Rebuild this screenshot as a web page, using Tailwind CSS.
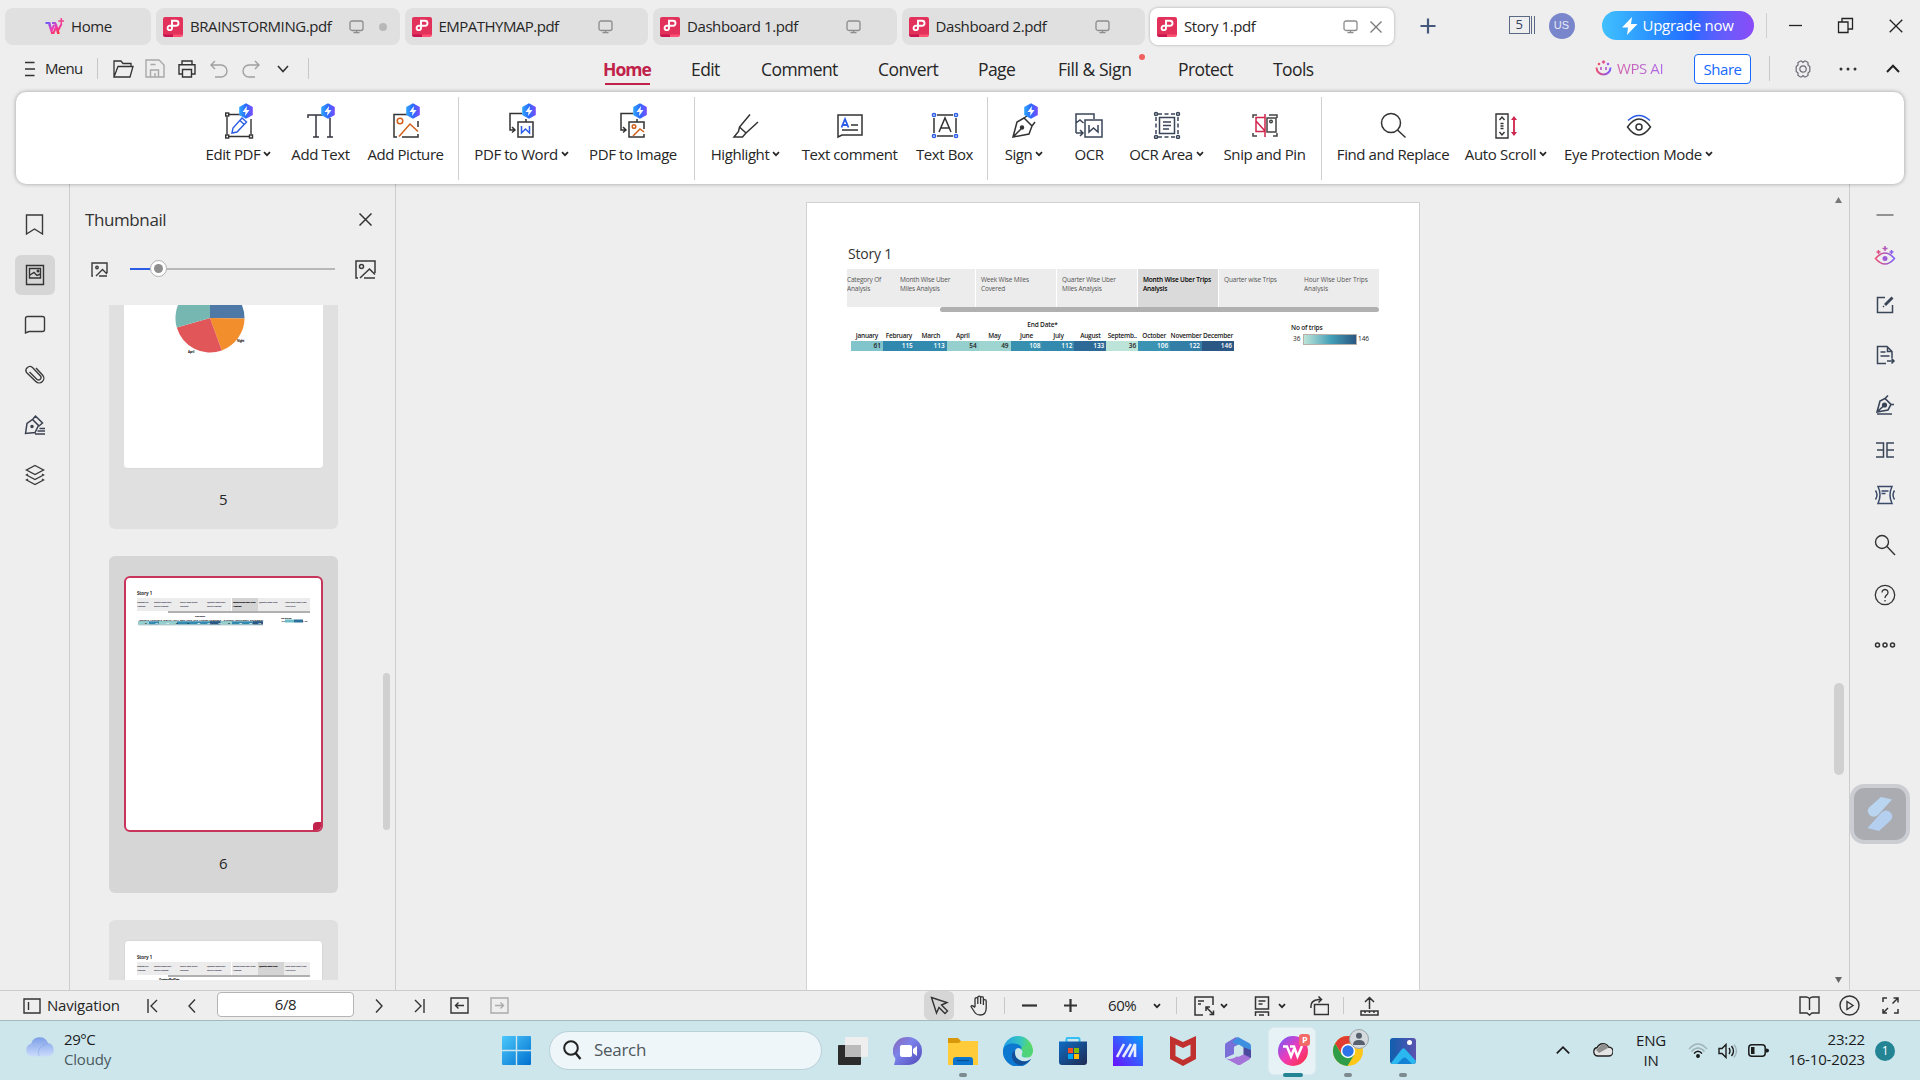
<!DOCTYPE html>
<html lang="en">
<head>
<meta charset="utf-8">
<title>Story 1.pdf</title>
<script src="https://cdn.jsdelivr.net/npm/@tailwindcss/browser@4"></script>
</head>
<body class="w-[1920px] h-[1080px] overflow-hidden bg-[#eeeeee] font-['Open_Sans','Noto_Sans',sans-serif] text-[15px] tracking-[-0.42px] text-[#262626] flex flex-col whitespace-nowrap">

<svg class="absolute w-0 h-0">
  <defs>
    <linearGradient id="badge" x1="0" x2="1"><stop offset="0" stop-color="#2fa6ff"/><stop offset=".5" stop-color="#2b6bff"/><stop offset="1" stop-color="#7a4dff"/></linearGradient>
    <linearGradient id="ai" x1="0" x2="1"><stop offset="0" stop-color="#ef5070"/><stop offset="1" stop-color="#7b5cff"/></linearGradient>
    <linearGradient id="wps" x1="0" y1="0" x2="1" y2="1"><stop offset="0" stop-color="#6a5cff"/><stop offset=".5" stop-color="#f03bb8"/><stop offset="1" stop-color="#ff3030"/></linearGradient>
  </defs>
  <symbol id="pdf" viewBox="0 0 20 20"><path d="M2 0h16a2 2 0 0 1 2 2v16H0V2a2 2 0 0 1 2-2z" fill="#e2315a"/><path d="M0 17.500h10V20H2a2 2 0 0 1-2-2z" fill="#c8154f"/><path d="M10 17.500h10v.5a2 2 0 0 1-2 2h-8z" fill="#ff5173"/><path d="M9 3.700h4a2.500 2.500 0 0 1 0 5H9zM9 8.700v2.200a2.200 2.200 0 1 1-2.200-2.200H9" fill="none" stroke="#fff" stroke-width="1.900"/></symbol>
  <symbol id="mon" viewBox="0 0 16 14"><rect x="1" y="1" width="13" height="9.500" rx="2" fill="none" stroke="#8c8c8c" stroke-width="1.300"/><path d="M7.500 10.500v2M4.500 12.700h6" stroke="#8c8c8c" stroke-width="1.300"/></symbol>
  <symbol id="chev" viewBox="0 0 8 8"><path d="M1 2.200l3 3 3-3" fill="none" stroke="#262626" stroke-width="1.700"/></symbol>
  <symbol id="bolt" viewBox="0 0 16 16"><path d="M8 .3L14.800 4v8L8 15.700 1.200 12V4z" fill="url(#badge)" stroke="none"/><path d="M9 3L4.500 9H7.500L7 13l4.500-6H8.500z" fill="#fff" stroke="none"/></symbol>
  <symbol id="doc" viewBox="0 0 199 256">
    <g font-family="Open Sans, sans-serif" fill="#222" font-weight="bold">
    <text x="13" y="18.500" font-size="4.500" textLength="15" font-weight="normal" stroke="#222" stroke-width=".2">Story 1</text>
    <path d="M13 22h173v13H13z" fill="#ececec"/>
    <g font-size="2.300" fill="#3a3550"><text x="13" y="26.500" textLength="11">Category Of</text><text x="13" y="30.500" textLength="8">Analysis</text><text x="30" y="26.500" textLength="17">Month Wise Uber</text><text x="30" y="30.500" textLength="14">Miles Analysis</text><text x="56" y="26.500" textLength="17">Week Wise Miles</text><text x="56" y="30.500" textLength="8">Covered</text><text x="83" y="26.500" textLength="18">Quarter Wise Uber</text><text x="83" y="30.500" textLength="14">Miles Analysis</text><text x="109" y="26.500" textLength="22">Month Wise Uber Trips</text><text x="109" y="30.500" textLength="8">Analysis</text><text x="135" y="26.500" textLength="18">Quarter wise Trips</text><text x="161" y="26.500" textLength="21">Hour Wise Uber Trips</text><text x="161" y="30.500" textLength="10">Analysis</text></g>
    <path d="M107.500 22v13" stroke="#fff"/>
    <path d="M44 36h142" stroke="#b0b0b0" stroke-width="1.800"/></g>
  </symbol>
</svg>

<!-- Document tabs -->
<header class="h-[45px] pl-[5px] flex items-end gap-[5px] shrink-0">
  <div class="w-[146px] h-[37px] rounded-lg bg-[#e0e0e0] flex items-center pl-[39px] gap-[7px]">
    <svg class="w-[20px] h-[18px]" viewBox="0 0 20 18"><path d="M1.500 5h4l2 8 2.500-6M8 5h3l2.500 8.500L17.500 6M5 6l3 9h1.500l3-7 2 7h1" fill="none" stroke="url(#wps)" stroke-width="2"/><path d="M17.300 0v6M14.300 3h6" stroke="#f0408e" stroke-width="1.500"/></svg>
    <span>Home</span></div>
  <div class="w-[243.500px] h-[37px] rounded-lg bg-[#e0e0e0] flex items-center pl-[7px]">
    <svg class="w-5 h-5"><use href="#pdf"/></svg><span class="ml-[7px] w-[159px]">BRAINSTORMING.pdf</span><svg class="w-4 h-3.5"><use href="#mon"/></svg><i class="ml-[14px] size-2 rounded-full bg-[#b8b8b8]"></i></div>
  <div class="w-[243.500px] h-[37px] rounded-lg bg-[#e0e0e0] flex items-center pl-[7px]">
    <svg class="w-5 h-5"><use href="#pdf"/></svg><span class="ml-[7px] w-[159px] tracking-[-0.52px]">EMPATHYMAP.pdf</span><svg class="w-4 h-3.5"><use href="#mon"/></svg></div>
  <div class="w-[243.500px] h-[37px] rounded-lg bg-[#e0e0e0] flex items-center pl-[7px]">
    <svg class="w-5 h-5"><use href="#pdf"/></svg><span class="ml-[7px] w-[159px]">Dashboard 1.pdf</span><svg class="w-4 h-3.5"><use href="#mon"/></svg></div>
  <div class="w-[243.500px] h-[37px] rounded-lg bg-[#e0e0e0] flex items-center pl-[7px]">
    <svg class="w-5 h-5"><use href="#pdf"/></svg><span class="ml-[7px] w-[159px]">Dashboard 2.pdf</span><svg class="w-4 h-3.5"><use href="#mon"/></svg></div>
  <div class="w-[243.500px] h-[37px] rounded-lg bg-white shadow-[0_0_3px_rgba(0,0,0,0.3)] flex items-center pl-[7px]">
    <svg class="w-5 h-5"><use href="#pdf"/></svg><span class="ml-[7px] w-[159px]">Story 1.pdf</span><svg class="w-4 h-3.5"><use href="#mon"/></svg>
    <svg class="ml-[10px] w-3.5 h-3.5" viewBox="0 0 14 14"><path d="M1.500 1.500l11 11m0-11l-11 11" stroke="#777" stroke-width="1.300"/></svg></div>
  <div class="ml-[21px] h-[37px] mb-[1px] flex items-center">
    <svg class="w-4 h-4" viewBox="0 0 16 16"><path d="M8 .5v15M.5 8h15" stroke="#46587a" stroke-width="2.200"/></svg>
    <div class="ml-[73px] w-[26px] h-[19px] flex">
      <span class="w-[21px] h-[18px] border-[1.500px] border-[#5a6884] text-[13px] leading-[15px] text-center text-[#34425e]">5</span>
      <i class="ml-[1px] h-[18px] w-[4px] border-x border-[#5a6884]"></i></div>
    <span class="ml-[14px] w-[26px] h-[26px] rounded-full bg-[#7986cb] text-[#e8eaf8] text-[11px] tracking-normal font-['Liberation_Sans',sans-serif] leading-[25px] text-center">US</span>
    <div class="ml-[27px] w-[152px] h-[29px] rounded-full bg-linear-to-r from-[#41c0ff] via-[#2668ff] via-60% to-[#8a4bf8] text-white flex items-center pl-[20px]">
      <svg class="w-[16px] h-[18px]" viewBox="0 0 16 18"><path d="M10 0L0 10.500h6L5 18 15.500 7H9z" fill="#fff"/></svg><span class="ml-[5px] tracking-[-0.28px]">Upgrade now</span></div>
    <i class="ml-[12px] w-px h-[25px] bg-[#cfcfcf]"></i>
    <svg class="ml-[22px] w-[13px] h-[14px]" viewBox="0 0 13 14"><path d="M0 6.500h13" stroke="#222" stroke-width="1.300"/></svg>
    <svg class="ml-[35px] w-[17px] h-[17px]" viewBox="0 0 17 17"><path d="M1.500 5h9.500v10.500H1.500zM5 5V1.500h10.500V12H11" fill="none" stroke="#222" stroke-width="1.300"/></svg>
    <svg class="ml-[35px] w-[14px] h-[14px]" viewBox="0 0 14 14"><path d="M.7.7l12.600 12.600m0-12.600L.7 13.300" stroke="#222" stroke-width="1.300"/></svg>
  </div>
</header>

<!-- Menu bar -->
<nav class="h-[47px] flex items-center shrink-0 relative">
  <svg class="ml-[25px] w-[10px] h-[16px]" viewBox="0 0 10 16"><path d="M0 1.500h9.500M0 8h10M0 14.500h9.500" stroke="#333" stroke-width="1.300"/></svg>
  <span class="ml-[10px] w-[52px] tracking-[-0.7px]">Menu</span>
  <i class="w-px h-[21px] bg-[#c8c8c8]"></i>
  <svg class="ml-[15px] w-[21px] h-[18px]" viewBox="0 0 21 18" fill="none" stroke="#333" stroke-width="1.300"><path d="M1 17V1h7l2 2.500h8V6.500M1 17l4-10.500h15L17 17z"/></svg>
  <svg class="ml-[11px] w-[20px] h-[19px]" viewBox="0 0 20 19" fill="none" stroke="#a8a8a8" stroke-width="1.400"><path d="M1 1h13l5 5v12H1zM5.500 18v-7h8v7M5.500 5.500h5M10 18v-4"/></svg>
  <svg class="ml-[13px] w-[18px] h-[18px]" viewBox="0 0 18 18" fill="none" stroke="#333" stroke-width="1.400"><path d="M4 4.500V1h10v3.500M4 14H1V4.700h16V14h-3M4.500 9.500h9V17h-9z"/></svg>
  <svg class="ml-[14px] w-[18px] h-[18px]" viewBox="0 0 18 18" fill="none" stroke="#a0a0a0" stroke-width="1.400"><path d="M5 1L1 5l4 4M1 5h10a6 6 0 0 1 0 12H5"/></svg>
  <svg class="ml-[14px] w-[18px] h-[18px]" viewBox="0 0 18 18" fill="none" stroke="#a0a0a0" stroke-width="1.400"><path d="M13 1l4 4-4 4M17 5H7a6 6 0 0 0 0 12h6"/></svg>
  <svg class="ml-[17px] w-[12px] h-[8px]" viewBox="0 0 12 8"><path d="M1 1l5 5.500L11 1" fill="none" stroke="#333" stroke-width="1.600"/></svg>
  <i class="ml-[19px] w-px h-[21px] bg-[#c8c8c8]"></i>
  <div class="ml-[294px] flex items-center text-[17.500px] tracking-[-0.58px] h-[38px] pt-px">
    <b class="w-[88px] text-[#c0224a] font-bold tracking-[-0.95px] relative">Home<i class="absolute left-[2px] -bottom-[3px] w-[45px] h-[2px] bg-[#c0224a]"></i></b>
    <span class="w-[70px]">Edit</span><span class="w-[117px]">Comment</span><span class="w-[100px]">Convert</span><span class="w-[80px]">Page</span>
    <span class="w-[120px] relative tracking-[-0.45px]">Fill &amp; Sign<i class="absolute left-[81px] -top-[2px] size-[6px] rounded-full bg-[#f0605e]"></i></span>
    <span class="w-[95px]">Protect</span><span class="w-[60px]">Tools</span>
  </div>
  <svg class="ml-[262px] w-[17px] h-[17px]" viewBox="0 0 17 17"><path d="M1.500 7.500a7 7 0 1 0 14 0" fill="none" stroke="url(#ai)" stroke-width="2"/><path d="M8.500 0l2 2-2 2-2-2z" fill="#e2508c"/><circle cx="4" cy="4" r="1.300" fill="#ef5070"/><circle cx="13" cy="4" r="1.300" fill="#a05cf0"/><path d="M6 7v3M11 7v3" stroke="#b458c8" stroke-width="1.600"/></svg>
  <span class="ml-[5px] w-[77px]"><span class="bg-linear-to-r from-[#cf5fa8] to-[#b06ae8] bg-clip-text text-transparent">WPS AI</span></span>
  <span class="w-[57px] h-[30px] rounded border border-[#1769ff] bg-white text-[#1769ff] text-center leading-[28px]">Share</span>
  <i class="ml-[18px] w-px h-[25px] bg-[#c8c8c8]"></i>
  <svg class="ml-[24px] w-[18px] h-[18px]" viewBox="0 0 18 18" fill="none" stroke="#6b6b76" stroke-width="1.200"><path d="M6.500 1h1l1.500 1.500L10.500 1h1L14 2.500V5l1.800 1.500v5L14 13v2.500L11.500 17h-1L9 15.500 7.500 17h-1L4 15.500V13l-1.800-1.500v-5L4 5V2.500z"/><circle cx="9" cy="9" r="3.200"/></svg>
  <svg class="ml-[27px] w-[18px] h-[4px]" viewBox="0 0 18 4" fill="#333"><circle cx="2" cy="2" r="1.500"/><circle cx="9" cy="2" r="1.500"/><circle cx="16" cy="2" r="1.500"/></svg>
  <svg class="ml-[29px] w-[14px] h-[9px]" viewBox="0 0 14 9"><path d="M1 8l6-6.300L13 8" fill="none" stroke="#222" stroke-width="2"/></svg>
</nav>

<!-- Ribbon -->
<section class="mx-4 w-[1888px] h-[92px] rounded-[10px] bg-white shadow-[0_0_4px_rgba(0,0,0,0.35)] shrink-0 flex items-center relative z-10 pl-[189px] [&>div]:flex [&>div]:flex-col [&>div]:items-center [&>div]:shrink-0 [&>div>svg]:w-8 [&>div>svg]:h-9 [&>div>p]:flex [&>div>p]:items-center [&>div>p]:gap-[3px] [&>div>p]:h-[22px] [&>div>p]:mt-[4px] [&>div]:-mt-[8px] [&_p_svg]:w-[8px] [&_p_svg]:h-[8px] [&>i]:w-px [&>i]:h-[83px] [&>i]:bg-[#cfcfcf] [&>i]:shrink-0">
  <div class="w-[67px]"><svg viewBox="0 0 32 36" fill="none" stroke="#333" stroke-width="1.400"><path d="M4 13.500v18M6 11.500h12M28 16v15.500M6 33.500h20"/><g fill="#fff"><rect x="2.700" y="10" width="3" height="3"/><rect x="2.700" y="32" width="3" height="3"/><rect x="26.500" y="32" width="3" height="3"/></g><path d="M9 30l1-5 9-10 4.500 4-9.500 10zM17 17.500l4 3.800" stroke="#2b5ce6"/><use href="#bolt" x="15" y="0" width="16" height="16"/></svg><p><span>Edit PDF</span><svg><use href="#chev"/></svg></p></div>
  <div class="w-[59px] ml-[19px]"><svg viewBox="0 0 32 36" fill="none" stroke="#34343f" stroke-width="1.500"><path d="M3 15v-3h20M11 12v22M8 34h6M25 15v19M22 34h6"/><use href="#bolt" x="15" y="0" width="16" height="16"/></svg><p>Add Text</p></div>
  <div class="w-[75px] ml-[18px]"><svg viewBox="0 0 32 36" fill="none" stroke="#333" stroke-width="1.500"><path d="M17 11.500H4V34h3M12 34h16v-3M28 18v6"/><circle cx="10" cy="18" r="2.800" stroke="#d2601a"/><path d="M9 33.500L20 21l8 7.500" stroke="#d2601a"/><use href="#bolt" x="15" y="0" width="16" height="16"/></svg><p>Add Picture</p></div>
  <i class="ml-[15px]"></i>
  <div class="w-[95px] ml-[15px]"><svg viewBox="0 0 32 36" fill="none" stroke="#333" stroke-width="1.500"><path d="M16 10.500H4V27h5M6 24l3 3-3 2.500M20 16v3M12 19h15v15H12z"/><path d="M15.500 23v7l4-4 4 4v-7" stroke="#2b5ce6"/><use href="#bolt" x="15" y="0" width="16" height="16"/></svg><p><span>PDF to Word</span><svg><use href="#chev"/></svg></p></div>
  <div class="w-[90px] ml-[19px]"><svg viewBox="0 0 32 36" fill="none" stroke="#333" stroke-width="1.500"><path d="M16 10.500H4V27h5M6 24l3 3-3 2.500M20 16v3M27 26v-7H12v15h15v-3"/><circle cx="17" cy="23.500" r="1.800" stroke="#d2601a"/><path d="M16 33l7-7 4 3" stroke="#d2601a"/><use href="#bolt" x="15" y="0" width="16" height="16"/></svg><p>PDF to Image</p></div>
  <i class="ml-[16px]"></i>
  <div class="w-[73px] ml-[14px]"><svg viewBox="0 0 32 36" fill="none" stroke="#333" stroke-width="1.500"><path d="M20 11.500L9.500 24l-1 4.500L4 34h8.500l3-3.500L28 19M9.500 24l6.500 6"/></svg><p><span>Highlight</span><svg><use href="#chev"/></svg></p></div>
  <div class="w-[95px] ml-[20px]"><svg viewBox="0 0 32 36" fill="none" stroke="#333" stroke-width="1.500"><path d="M4 34V12h24v20H8zM17 22h7M8 27h16"/><path d="M7.500 24.500L11 16l3.500 8.500M8.500 22h5" stroke="#2b5ce6" stroke-width="1.800"/></svg><p>Text comment</p></div>
  <div class="w-[55px] ml-[20px]"><svg viewBox="0 0 32 36" fill="none" stroke="#333" stroke-width="1.500"><path d="M8 12h16M8 33h16M5 15v15M27 15v15"/><path d="M10 29l6-14 6 14M12 25h8"/><g fill="#fff" stroke="#2b5ce6"><circle cx="5" cy="12" r="1.600"/><circle cx="27" cy="12" r="1.600"/><circle cx="5" cy="33" r="1.600"/><circle cx="27" cy="33" r="1.600"/></g></svg><p>Text Box</p></div>
  <i class="ml-[15px]"></i>
  <div class="w-[40px] ml-[16px]"><svg viewBox="0 0 32 36" fill="none" stroke="#333" stroke-width="1.500"><path d="M5 34l4-15 7-4 8 8-3 8zM16 15l3-2M24 23l3-4M5 34l8-8"/><circle cx="14" cy="24.500" r="1.500" fill="#333"/><use href="#bolt" x="15" y="0" width="16" height="16"/></svg><p><span>Sign</span><svg><use href="#chev"/></svg></p></div>
  <div class="w-[30px] ml-[30px]"><svg viewBox="0 0 32 36" fill="none" stroke="#3a4558" stroke-width="1.500"><path d="M21 16v-5H3v19M3 20l4-3 3.500 3M3 30h6M7 27l3 3-3 3M12 17h17v17H12z"/><path d="M16 22v7l4.500-4 4.500 4v-7"/></svg><p>OCR</p></div>
  <div class="w-[75px] ml-[25px]"><svg viewBox="0 0 32 36" fill="none" stroke="#3a4558" stroke-width="1.500"><path d="M5 14v18M27 14v18M7 11h18M7 34h18" stroke-dasharray="4 2.500"/><path d="M8.500 14.500h15v16h-15zM12 19h8M12 22.500h8M12 26h6"/><g fill="#fff"><circle cx="5" cy="11" r="1.500"/><circle cx="27" cy="11" r="1.500"/><circle cx="5" cy="34" r="1.500"/><circle cx="27" cy="34" r="1.500"/></g></svg><p><span>OCR Area</span><svg><use href="#chev"/></svg></p></div>
  <div class="w-[83px] ml-[19px]"><svg viewBox="0 0 32 36" fill="none" stroke="#444" stroke-width="1.500"><path d="M4 15v-3h4M4 30v3h4M20 12h8v3M24 33h4v-3M18 15h9v14h-9z"/><circle cx="22" cy="18.500" r="1.300"/><path d="M16 11v23M16 14.500H7v14h9M7 18l9 10" stroke="#d0244c"/></svg><p>Snip and Pin</p></div>
  <i class="ml-[15px]"></i>
  <div class="w-[114px] ml-[14px]"><svg viewBox="0 0 32 36" fill="none" stroke="#333" stroke-width="1.500"><circle cx="14" cy="20" r="9.500"/><path d="M20.500 27l8 7.500"/></svg><p>Find and Replace</p></div>
  <div class="w-[84px] ml-[14px]"><svg viewBox="0 0 32 36" fill="none" stroke="#333" stroke-width="1.400"><path d="M6 11h12v24H6zM9.500 17l2.500-3 2.500 3M10.500 20.500h3M10.500 23h3M10.500 25.500h3M9.500 29l2.500 3 2.500-3"/><path d="M24 15v16" stroke="#d0244c" stroke-width="1.800"/><path d="M24 13l3 4h-6zM24 33l3-4h-6z" fill="#d0244c" stroke="none"/></svg><p><span class="tracking-[-0.33px]">Auto Scroll</span><svg><use href="#chev"/></svg></p></div>
  <div class="w-[149px] ml-[16px]"><svg viewBox="0 0 32 36" fill="none" stroke="#333" stroke-width="1.500"><path d="M4.500 24q11.500-16 23 0q-11.500 16-23 0z"/><circle cx="16" cy="24" r="3"/><path d="M5 17.500q11-10 22 0" stroke="#2b5ce6"/></svg><p><span class="tracking-[-0.36px]">Eye Protection Mode</span><svg><use href="#chev"/></svg></p></div>
</section>

<main class="h-[806px] flex shrink-0">
  <!-- Navigation rail -->
  <aside class="w-[70px] border-r border-[#cdcdcd] pt-[21px] pl-[15px] flex flex-col gap-[10px] shrink-0 [&>div]:size-10 [&>div]:flex [&>div]:items-center [&>div]:justify-center [&_svg]:size-[22px]">
    <div><svg viewBox="0 0 22 22" fill="none" stroke="#3a3a3a" stroke-width="1.400"><path d="M2.500 1h16v19l-8-5-8 5z"/></svg></div>
    <div class="rounded-md bg-[#d6d6d6]"><svg viewBox="0 0 22 22" fill="none" stroke="#333" stroke-width="1.400"><path d="M2.500 1.500h17v19h-17zM5.500 4.500h11v9.500h-11zM6 11l4-2.500 3 3 3.500-1.500"/><circle cx="14" cy="7" r=".8"/></svg></div>
    <div><svg viewBox="0 0 22 22" fill="none" stroke="#3a3a3a" stroke-width="1.400"><path d="M1.500 19V4.500a2 2 0 0 1 2-2h15a2 2 0 0 1 2 2v11a2 2 0 0 1-2 2H5z"/></svg></div>
    <div><svg viewBox="0 0 22 22" fill="none" stroke="#3a3a3a" stroke-width="1.400"><path d="M12 4l6.500 7a4.600 4.600 0 0 1-6.700 6.500L3 9a3.900 3.900 0 0 1 5.500-5.500l8 8.500a2.500 2.500 0 0 1-3.500 3.500L5.500 8"/></svg></div>
    <div><svg viewBox="0 0 22 22" fill="none" stroke="#3a4050" stroke-width="1.500"><path d="M1.500 19.500L3 9.500l5.500-4 6 6-3.500 7zM9 5l2.500-3 7 7-3.500 3M15.500 14.500H21M13.500 17H21M11 20h10"/><circle cx="8" cy="12.500" r="1" fill="#333"/></svg></div>
    <div><svg viewBox="0 0 22 22" fill="none" stroke="#3a3a3a" stroke-width="1.400"><path d="M11 1.500l8.500 4.500-8.500 4.500L2.500 6zM4 10l-1.500 1 8.500 4.500 8.500-4.500-1.500-1M4 15l-1.500 1 8.500 4.500 8.500-4.500-1.500-1"/></svg></div>
  </aside>

  <!-- Thumbnail panel -->
  <aside class="w-[326px] border-r border-[#cdcdcd] shrink-0 relative">
    <div class="h-[71px] pl-[15px] pr-[23px] flex items-center justify-between text-[17px] tracking-[-0.4px] text-[#333]"><span>Thumbnail</span>
      <svg class="size-[13px]" viewBox="0 0 13 13"><path d="M.5.5l12 12m0-12l-12 12" stroke="#333" stroke-width="1.500"/></svg></div>
    <div class="h-[28px] pl-[21px] flex items-center">
      <svg class="w-[17px] h-[15px]" viewBox="0 0 17 15" fill="none" stroke="#3a3a3a" stroke-width="1.400"><path d="M2 14H1V1h15v10M5 14l6.500-6.500L16 12M8 14h8"/><circle cx="6" cy="5.500" r="1.200"/></svg>
      <div class="ml-[22px] w-[205px] h-[2px] bg-[#b8b8b8] relative"><i class="block w-[20px] h-[2px] bg-[#2b5ce6]"></i><i class="absolute left-[20px] -top-[8px] size-[17px] rounded-full bg-white border border-[#b0b0b0] p-[3px]"><i class="block size-[9px] rounded-full bg-[#8e8e8e]"></i></i></div>
      <svg class="ml-[20px] w-[21px] h-[19px]" viewBox="0 0 21 19" fill="none" stroke="#3a3a3a" stroke-width="1.500"><path d="M3 18H1V1h19v12M5 18l9.500-9L20 14.500M9 18h11"/><circle cx="6.500" cy="6.500" r="2"/></svg>
    </div>
    <div class="mt-[22px] ml-[39px] w-[229px] h-[675px] overflow-hidden">
      <div class="h-[224px] rounded-b-md bg-[#e0e0e0] flex flex-col items-center">
        <div class="w-[199px] h-[164px] bg-white rounded-b border-b border-[#d8d8d8]">
          <svg class="w-[199px] h-[163px]" viewBox="0 0 199 163"><path d="M86 13V-21.500A34.500 34.500 0 0 1 120.500 13.600z" fill="#4e79a7"/><path d="M86 13l34.500.6A34.500 34.500 0 0 1 97.800 45.400z" fill="#f28e2b"/><path d="M86 13l11.800 32.400A34.500 34.500 0 0 1 52.800 22.500z" fill="#e15759"/><path d="M86 13L52.800 22.500A34.500 34.500 0 0 1 86-21.500z" fill="#76b7b2"/><g font-family="Open Sans, sans-serif" font-weight="bold" font-size="3" fill="#111"><text x="113" y="36.500" textLength="7">Night</text><text x="64" y="48" textLength="6">April</text></g></svg></div>
        <span class="mt-[19px] mr-px leading-[22px]">5</span></div>
      <div class="mt-[27px] h-[337px] rounded-md bg-[#d6d6d6] flex flex-col items-center pt-[20px]">
        <div class="w-[199px] h-[256px] bg-white rounded-[6px] border-2 border-[#c8345a] relative overflow-hidden">
          <svg class="absolute -left-[2px] -top-[2px] w-[199px] h-[256px]" viewBox="0 0 199 256"><use href="#doc"/><path d="M108 22h26v13h-26z" fill="#b8b8b8" opacity=".45"/><g font-family="Open Sans, sans-serif" font-weight="bold" font-size="2.400" fill="#000"><text x="109" y="26.500" textLength="22">Month Wise Uber Trips</text><text x="109" y="30.500" textLength="8">Analysis</text><text x="71" y="41" textLength="10">End Date*</text><text x="15" y="45" textLength="124">January  February  March  April  May  June  July  August  Septemb..  October  November December</text><text x="157" y="43" textLength="10">No of trips</text><text x="157.500" y="46" textLength="3">36</text><text x="179" y="46" textLength="4">146</text></g><path d="M14.500 47H139" stroke="#3389ae" stroke-width="3.500"/><path d="M14.500 47H25M35 47H53M97 47H108" stroke="#95cfce" stroke-width="3.500"/><path d="M129 47h10M86 47h10" stroke="#2a5783" stroke-width="3.500"/><path d="M14.500 49H139" stroke="#c5d0d0"/><path d="M161 45h9" stroke="#6bbcc6" stroke-width="3"/><path d="M170 45h9" stroke="#2d709b" stroke-width="3"/><g font-family="Open Sans, sans-serif" font-size="2.200" fill="#fff" font-weight="bold"><text x="21" y="48" fill="#111">61</text><text x="31" y="48">115</text><text x="42" y="48">113</text><text x="52" y="48" fill="#111">54</text><text x="63" y="48" fill="#111">49</text><text x="73" y="48">108</text><text x="83" y="48">112</text><text x="94" y="48">133</text><text x="104" y="48" fill="#111">36</text><text x="115" y="48">106</text><text x="125" y="48">122</text><text x="134" y="48">146</text></g></svg>
          <i class="absolute -right-px -bottom-px w-[9px] h-[9px] rounded-tl bg-[#c0224a]"></i>
        </div>
        <span class="mt-[20px] mr-px leading-[22px]">6</span></div>
      <div class="mt-[27px] h-[120px] rounded-md bg-[#e0e0e0] flex justify-center pt-[20px]">
        <div class="w-[199px] h-[256px] bg-white rounded border border-[#d8d8d8]"><svg class="-ml-px -mt-px w-[199px] h-[256px]" viewBox="0 0 199 256"><use href="#doc"/><path d="M134 22h26v13h-26z" fill="#b8b8b8" opacity=".45"/><g font-family="Open Sans, sans-serif" font-weight="bold" font-size="2.400" fill="#000"><text x="135" y="26.500" textLength="18">Quarter wise Trips</text><text x="35" y="41" font-size="2.800" textLength="20">Quarter of End Date</text></g></svg></div></div>
    </div>
    <i class="absolute left-[313px] top-[489px] w-[7px] h-[157px] rounded-full bg-[#d0d0d0]"></i>
  </aside>

  <!-- Page view -->
  <section class="flex-1 pl-[410px] pt-[18px] overflow-hidden">
    <article class="w-[614px] h-[800px] bg-white border border-[#d2d2d2] pl-[40px] pt-[42px] text-[6.500px] tracking-[-0.17px]">
      <h1 class="pl-px text-[14px] leading-[18px] text-[#333] tracking-[-0.2px]">Story 1</h1>
      <div class="mt-[6px] w-[532px] h-[38px] bg-[#ececec] flex leading-[9px] text-[#555] [&>p]:h-full [&>p]:pt-[6px] [&>p]:shrink-0 [&>p]:overflow-hidden">
        <p class="w-[48px]">Category Of<br>Analysis</p>
        <p class="w-[81px] pl-[5px] border-r border-white">Month Wise Uber<br>Miles Analysis</p>
        <p class="w-[81px] pl-[5px] border-r border-white">Week Wise Miles<br>Covered</p>
        <p class="w-[81px] pl-[5px] border-r border-white">Quarter Wise Uber<br>Miles Analysis</p>
        <p class="w-[81px] pl-[5px] border-r border-white bg-[#dadada] text-black font-semibold tracking-[-0.18px]">Month Wise Uber Trips<br>Analysis</p>
        <p class="w-[80px] pl-[5px]">Quarter wise Trips</p>
        <p class="w-[80px] pl-[5px] tracking-[-0.05px]">Hour Wise Uber Trips<br>Analysis</p>
      </div>
      <i class="block ml-[93px] w-[439px] h-[5px] rounded-full bg-[#b0b0b0]"></i>
      <div class="flex">
        <div class="ml-[4px] mt-[8px] w-[383px] text-[#222] font-semibold">
          <p class="h-[10px] leading-[10px] text-center">End Date*</p>
          <div class="mt-[1px] grid grid-cols-12 text-center h-[10px] leading-[10px] tracking-[-0.25px] [&>span]:-mx-1"><span>January</span><span>February</span><span>March</span><span>April</span><span>May</span><span>June</span><span>July</span><span>August</span><span>Septemb..</span><span>October</span><span>November</span><span>December</span></div>
          <div class="grid grid-cols-12 text-right h-[10px] leading-[10px] text-white tracking-normal border-b border-[#d0d0d0] [&>span]:pr-[2px]"><span class="bg-[#82c4cc] text-[#222]">61</span><span class="bg-[#3088ae]">115</span><span class="bg-[#328baf]">113</span><span class="bg-[#95cfce] text-[#222]">54</span><span class="bg-[#9fd5d0] text-[#222]">49</span><span class="bg-[#3790b0]">108</span><span class="bg-[#3389ae]">112</span><span class="bg-[#2e6a97]">133</span><span class="bg-[#bce4d8] text-[#222]">36</span><span class="bg-[#3a93b2]">106</span><span class="bg-[#327ea7]">122</span><span class="bg-[#2a5783]">146</span></div>
        </div>
        <div class="ml-[57px] mt-[11px] text-[#222]">
          <p class="h-[10px] leading-[10px] font-semibold tracking-[-0.15px]">No of trips</p>
          <div class="flex items-center leading-[10px] h-[12px] tracking-[-0.05px]"><span class="ml-[2px] w-[10px]">36</span><i class="w-[54px] h-[11px] border border-[#b8b0a8] bg-linear-to-r from-[#bce4d8] via-[#45a2b9] to-[#2a5783]"></i><span class="ml-[1px]">146</span></div>
        </div>
      </div>
    </article>
  </section>
  <div class="w-[20px] shrink-0 flex flex-col items-center border-r border-[#cdcdcd] pt-[13px] pr-[2px] h-full">
    <svg class="w-[7px] h-[6px]" viewBox="0 0 7 6"><path d="M3.500 0L7 6H0z" fill="#777"/></svg>
    <i class="mt-[480px] w-[10px] h-[92px] rounded-full bg-[#d0d0d0]"></i>
    <svg class="mt-[202px] w-[7px] h-[6px]" viewBox="0 0 7 6"><path d="M3.500 6L7 0H0z" fill="#666"/></svg>
  </div>

  <!-- Tool rail -->
  <aside class="w-[70px] shrink-0 relative flex flex-col items-center pt-[20px] [&>svg]:size-[22px] [&>svg]:shrink-0 fill-none">
    <svg viewBox="0 0 22 22"><path d="M2.500 11h17" stroke="#929292" stroke-width="2"/></svg>
    <svg class="mt-[19px]" viewBox="0 0 22 22" stroke="url(#ai)" stroke-width="1.500"><path d="M1.500 13.500q9.500-11 19 0q-9.500 11-19 0zM11 1v5M8.500 3.500h5M4.500 5v4M2.500 7h4M17.500 5v4M15.500 7h4"/><circle cx="11" cy="13.500" r="2.500" fill="#a05cd8" stroke="none"/></svg>
    <svg class="mt-[27px]" viewBox="0 0 22 22" stroke="#3a4558" stroke-width="1.500"><path d="M11 3.500H3.500v15h15V11"/><path d="M11 11l7.500-7.500" stroke-width="2.800"/><path d="M9 13l1-1"/></svg>
    <svg class="mt-[28px]" viewBox="0 0 22 22" stroke="#3a4558" stroke-width="1.500"><path d="M12 19.500H3.500v-17H13l5 5V14M6.500 8h5M6.500 12h9M13 17h7M17.500 14.500l2.500 2.500-2.500 2.500M13.500 3v4.500H18"/></svg>
    <svg class="mt-[28px]" viewBox="0 0 22 22" stroke="#3a4558" stroke-width="1.600"><path d="M3 18l3-11 5-2.500 6 6-3 5.500zM11 4.500l3-3M16 10.500h4M3 18l7-6.500M3 20h15"/><circle cx="10.500" cy="11" r="1.800" fill="#3a4558"/></svg>
    <svg class="mt-[23px]" viewBox="0 0 22 22" stroke="#3a4558" stroke-width="1.500"><path d="M2 4h7.500v14H2M3 11h6.500M20 4h-7v14h7M13 11h7"/></svg>
    <svg class="mt-[23px]" viewBox="0 0 22 22" stroke="#3a4a68" stroke-width="1.500"><path d="M4 2.500h14q-4 8.500 0 17H4q4-8.500 0-17zM7.500 7h7M7.500 9.500h4M1.500 6.500q3 4.500 0 9M20.500 6.500q-3 4.500 0 9"/></svg>
    <svg class="mt-[28px]" viewBox="0 0 22 22" stroke="#333" stroke-width="1.400"><circle cx="8" cy="8" r="6.500"/><path d="M13 12.500l8 8.500"/></svg>
    <svg class="mt-[28px]" viewBox="0 0 22 22" stroke="#333" stroke-width="1.300"><circle cx="11" cy="11" r="9.700"/><path d="M8 8.500a3 3 0 1 1 4.500 2.600q-1.500 1-1.500 3" /><path d="M11 16v1.600"/></svg>
    <svg class="mt-[28px]" viewBox="0 0 22 22" stroke="#333" stroke-width="1.500"><circle cx="3.500" cy="11" r="2"/><circle cx="11" cy="11" r="2"/><circle cx="18.500" cy="11" r="2"/></svg>
    <div class="absolute left-0 top-[600px] size-[60px] rounded-[14px] bg-[#abacb2] border-4 border-[#cccdd3] flex items-center justify-center"><svg class="w-[26px] h-[34px]" viewBox="0 0 26 34"><path d="M14 0l11 2.500L11 18q-4 3-8 .5-4-4-1-8z" fill="#b9d5f0"/><path d="M12 34L.5 31 15 15q4-3 8 0 4 3 1 8z" fill="#b4cff0"/></svg></div>
  </aside>
</main>

<!-- Status bar -->
<footer class="h-[31px] border-t border-b border-t-[#cdcdcd] border-b-[#a5b8be] flex items-center shrink-0 [&>svg]:shrink-0 [&>span]:shrink-0 fill-none stroke-[#333]">
  <svg class="ml-[23px] w-[18px] h-[16px]" viewBox="0 0 18 16" stroke-width="1.400"><path d="M1 1h16v14H1zM5.500 4v8"/></svg>
  <span class="ml-[6px] w-[100px] tracking-[-0.2px]">Navigation</span>
  <svg class="w-[11px] h-[14px]" viewBox="0 0 11 14" stroke-width="1.400"><path d="M1 0v14M10 1L4 7l6 6"/></svg>
  <svg class="ml-[30px] w-[8px] h-[14px]" viewBox="0 0 8 14" stroke-width="1.400"><path d="M7 .5L1 7l6 6.500"/></svg>
  <span class="ml-[21px] w-[137px] h-[25px] -mt-[2px] rounded bg-white border border-[#b4b4b4] text-center leading-[23px]">6/8</span>
  <svg class="ml-[21px] w-[8px] h-[14px]" viewBox="0 0 8 14" stroke-width="1.400"><path d="M1 .5L7 7l-6 6.500"/></svg>
  <svg class="ml-[31px] w-[11px] h-[14px]" viewBox="0 0 11 14" stroke-width="1.400"><path d="M10 0v14M1 1l6 6-6 6"/></svg>
  <svg class="ml-[25px] w-[19px] h-[17px]" viewBox="0 0 19 17" stroke-width="1.400"><path d="M1 1h17v15H1zM14 8.500H5.500M8.500 5.500l-3 3 3 3"/></svg>
  <svg class="ml-[21px] w-[19px] h-[17px] stroke-[#aaa]" viewBox="0 0 19 17" stroke-width="1.400"><path d="M1 1h17v15H1zM5 8.500h8.500M10.500 5.500l3 3-3 3"/></svg>
  <span class="ml-[415px] w-[30px] h-[29px] rounded-md bg-[#d6d6d6] flex items-center justify-center"><svg class="w-[19px] h-[19px]" viewBox="0 0 19 19" stroke-width="1.400"><path d="M1.500 1.500l15.500 5-5.500 2.500 6 6-2.500 2.500-6-6L6.500 17z"/></svg></span>
  <svg class="ml-[16px] w-[19px] h-[21px]" viewBox="0 0 19 21" stroke-width="1.300"><path d="M5 12V4a1.400 1.400 0 0 1 2.800 0v5V2.500a1.400 1.400 0 0 1 2.800 0V9 3a1.400 1.400 0 0 1 2.800 0v7V6a1.400 1.400 0 0 1 2.800 0v7q0 7-6 7-4 0-6-3.500L1 11.500q1-2 4 1"/></svg>
  <i class="ml-[15px] w-px h-[17px] bg-[#c8c8c8]"></i>
  <svg class="ml-[17px] w-[15px] h-[15px]" viewBox="0 0 15 15" stroke-width="2.200"><path d="M0 7.500h15"/></svg>
  <svg class="ml-[27px] w-[13px] h-[13px]" viewBox="0 0 13 13" stroke-width="2.200"><path d="M0 6.500h13M6.500 0v13"/></svg>
  <span class="ml-[31px] w-[45px]">60%</span>
  <svg class="w-[8px] h-[8px]"><use href="#chev"/></svg>
  <i class="ml-[15px] w-px h-[17px] bg-[#c8c8c8]"></i>
  <svg class="ml-[17px] w-[21px] h-[20px]" viewBox="0 0 21 20" stroke-width="1.500"><path d="M19 9V1H1v18h8M4 5h6M4 8h3M12 11l7.500 7.500M12 15v-4h4M19.500 14.500v4h-4"/></svg>
  <svg class="ml-[5px] w-[8px] h-[8px]"><use href="#chev"/></svg>
  <svg class="ml-[26px] w-[17px] h-[20px]" viewBox="0 0 17 20" stroke-width="1.500"><path d="M1.500 1h13v12h-13zM4.500 5h7M4.500 8h4M1.500 20v-4h13v4M5 19h5"/></svg>
  <svg class="ml-[7px] w-[8px] h-[8px]"><use href="#chev"/></svg>
  <svg class="ml-[24px] w-[19px] h-[20px]" viewBox="0 0 19 20" stroke-width="1.500"><path d="M4.500 8.500h14v10h-14zM1 12q-1-8 8-8.500h2M8.500.5l3 3-3 3"/></svg>
  <i class="ml-[14px] w-px h-[17px] bg-[#c8c8c8]"></i>
  <svg class="ml-[16px] w-[19px] h-[20px]" viewBox="0 0 19 20" stroke-width="1.500"><path d="M9.500 13V1.500M5 6l4.500-4.500L14 6M1 15h17v4H1zM5 15v2M9.500 15v2M14 15v2"/></svg>
  <svg class="ml-[420px] w-[21px] h-[20px]" viewBox="0 0 21 20" stroke-width="1.400"><path d="M10.500 2.500Q9 1 7 1H1v16h7l2.500 2 2.500-2h7V1h-6q-2 0-3.500 1.500zV14"/></svg>
  <svg class="ml-[19px] w-[21px] h-[21px]" viewBox="0 0 21 21" stroke-width="1.400"><circle cx="10.500" cy="10.500" r="9.500"/><path d="M8 6.500l6 4-6 4z"/></svg>
  <svg class="ml-[22px] w-[17px] h-[17px]" viewBox="0 0 17 17" stroke-width="1.500"><path d="M1 5V1h4M1 16l5-5M1 12v4h4M16 12v4h-4M10.500 6.500l5-5M11.500 1H16v4.500"/></svg>
</footer>

<!-- Taskbar -->
<footer class="h-[59px] bg-[#cde6ec] flex items-center shrink-0 text-[#1b1b1b] [&>*]:shrink-0">
  <svg class="ml-[25px] -mt-[8px] w-[31px] h-[21px]" viewBox="0 0 31 21"><defs><linearGradient id="cl" x1="0" y1="0" x2="0" y2="1"><stop offset="0" stop-color="#7d9fe8"/><stop offset="1" stop-color="#cbdcfb"/></linearGradient></defs><path d="M7 20.500a6.500 6.500 0 0 1-1-12.700A9 9 0 0 1 23 7a7 7 0 0 1 1 13.500z" fill="url(#cl)"/><path d="M14 20q-3-9 9-13" fill="none" stroke="#7796df" stroke-opacity=".4"/></svg>
  <div class="ml-[8px] w-[438px] leading-[20px] -mt-[3px]"><p>29°C</p><p class="text-[#4a5a60] tracking-[-0.2px]">Cloudy</p></div>
  <svg class="w-[29px] h-[29px]" viewBox="0 0 29 29"><defs><linearGradient id="win" x1="0" y1="0" x2="1" y2="1"><stop offset="0" stop-color="#4cc8fb"/><stop offset="1" stop-color="#0070d0"/></linearGradient></defs><path d="M0 1q0-1 1-1h12.800v13.800H0zM15.200 0H28q1 0 1 1v12.800H15.200zM0 15.200h13.800V29H1q-1 0-1-1zM15.200 15.200H29V28q0 1-1 1H15.200z" fill="url(#win)"/></svg>
  <div class="ml-[18px] w-[273px] h-[39px] -mt-px rounded-full bg-[#eef6f9] border border-[#b8d0d8] flex items-center pl-[13px] text-[17px] text-[#4f585c] tracking-[-0.3px]"><svg class="w-[19px] h-[20px]" viewBox="0 0 19 20" fill="none" stroke="#222" stroke-width="2"><circle cx="8" cy="8" r="6.800"/><path d="M12.500 13l5 6" stroke-width="2.400"/></svg><span class="ml-[12px]">Search</span></div>
  <div class="ml-[3px] h-full flex items-center [&>div]:w-[55px] [&>div]:h-[54px] [&>div]:flex [&>div]:items-center [&>div]:justify-center [&>div]:relative [&_svg]:size-[30px] [&_i]:absolute [&_i]:bottom-[1px] [&_i]:h-[4px] [&_i]:w-[8px] [&_i]:rounded-full [&_i]:bg-[#7b8b90]">
    <div><svg viewBox="0 0 30 30"><rect y="9" width="23" height="20" rx="1" fill="#2c2c2c"/><rect x="7" y="1" width="23" height="20" rx="1" fill="#eee"/><path d="M7 9h16v12H7z" fill="#bbb"/></svg></div>
    <div><svg viewBox="0 0 30 30"><defs><linearGradient id="chat" x1="0" y1="0" x2="1" y2="1"><stop stop-color="#8c64b4"/><stop offset=".4" stop-color="#7b83eb"/><stop offset="1" stop-color="#5048b8"/></linearGradient></defs><path d="M15 1a14 14 0 1 1 0 28H1l1.500-6A14 14 0 0 1 15 1z" fill="url(#chat)"/><rect x="7" y="9" width="12" height="12" rx="2" fill="#fff"/><path d="M20 13l4-3v10l-4-3z" fill="#fff"/></svg></div>
    <div><svg viewBox="0 0 30 30"><path d="M0 2h10l3 3h17v8H0z" fill="#d9970c"/><path d="M0 7h11l2-2h17v24H0z" fill="#ffcb38"/><path d="M5 29v-5q0-3 3-3h14q3 0 3 3v5z" fill="#0b74cf"/><path d="M9 24.500h12" stroke="#084f91" stroke-width="1.200"/></svg><i></i></div>
    <div><svg viewBox="0 0 30 30"><defs><linearGradient id="edge" x1="0" x2="1"><stop stop-color="#1f9ee8"/><stop offset=".6" stop-color="#37c6bf"/><stop offset="1" stop-color="#66e04c"/></linearGradient></defs><circle cx="15" cy="15" r="15" fill="url(#edge)"/><path d="M0 14C3 4 19 7 19 13q-6-1-7 4 0 8 9 8 4 0 7-2A15 15 0 0 1 0 14z" fill="#0c78d0"/><path d="M12 14q-5 4-2 10t9 5q6-2 9-6-10 5-15-2-2-4-1-7z" fill="#124f97"/><path d="M30 16q-1 6-7 5.500-5 0-4-3 2-4-3-6.500-4 0-4 4 0 7 7 9 7 1 11-4z" fill="#cde6ec"/><path d="M18 12q3 3 1 6 0 3 5 3 5-1 6-6-1-5-5-7z" fill="#4fd47a"/></svg></div>
    <div><svg viewBox="0 0 30 30"><defs><linearGradient id="st" x1="0" y1="0" x2="1" y2="1"><stop stop-color="#0f6cc4"/><stop offset="1" stop-color="#1e2b52"/></linearGradient></defs><path d="M8.500 7V3q0-1 1-1h11q1 0 1 1v4" fill="none" stroke="#35bff5" stroke-width="2"/><path d="M1 5.500h28V26q0 3-3 3H4q-3 0-3-3z" fill="url(#st)"/><path d="M10 12h5v5h-5z" fill="#f25022"/><path d="M16 12h5v5h-5z" fill="#7fba00"/><path d="M10 18h5v5h-5z" fill="#00a4ef"/><path d="M16 18h5v5h-5z" fill="#ffb900"/></svg></div>
    <div><svg viewBox="0 0 30 30"><defs><linearGradient id="ma" x1="0" y1="1" x2="1" y2="0"><stop stop-color="#6a10ff"/><stop offset="1" stop-color="#0aa0ff"/></linearGradient></defs><path d="M0 0h30v30H0z" fill="url(#ma)"/><path d="M4 21L11 8M10 21L18 8M16 21l6-13v13" fill="none" stroke="#e8ecff" stroke-width="2.600"/></svg></div>
    <div><svg viewBox="0 0 30 30"><path d="M2 0l13 6L28 0v23l-13 7L2 23z" fill="#c0302e"/><path d="M7.500 8.500L15 12l7.500-3.500V20L15 24l-7.500-4z" fill="#cde6ec"/></svg></div>
    <div><svg viewBox="0 0 30 30"><path d="M13 1L3 7q-1 1-1 2v13l9-4V11l9-5z" fill="#7a6fd8"/><path d="M15 1l11 6q2 1 2 3v10l-8-2v-6L9 6z" fill="#3e8fdf"/><path d="M2 22l12 6.500q2 1 4 0L27 23l1-4-8-2-9 5q-5 2-9 0z" fill="#a474d8"/><path d="M20 11l8 3v8l-8-4z" fill="#4b4a9f"/><path d="M11 11l5-2.500 4.500 3v7L15 21l-4-3z" fill="#cde6ec"/></svg></div>
    <div><span class="absolute left-[3px] top-[3px] size-[48px] rounded-md bg-[#e6f2f6] border border-[#dcebf0]"></span><svg class="relative" viewBox="0 0 30 30"><circle cx="15" cy="15" r="15" fill="url(#wps)"/><path d="M5 10.500h4l4 10 3-7.500M12 10.500h4l3.500 10L24 10" fill="none" stroke="#fff" stroke-width="2.400"/></svg><i class="w-[20px]! bg-[#238494]!"></i><b class="absolute left-[34px] top-[10px] w-[11px] h-[12px] rounded-[3px] bg-[#f26a68] text-white text-[9px] leading-[12px] text-center">P</b></div>
    <div><svg viewBox="0 0 30 30"><circle cx="15" cy="15" r="15" fill="#fdc61a"/><path d="M2 7.500A15 15 0 0 1 28 7.500H15L9 18.500z" fill="#e03c31"/><path d="M2 7.500A15 15 0 0 0 14.500 30L21 19l-12 0z" fill="#2d9d4a"/><circle cx="15" cy="15" r="7.200" fill="#fff"/><circle cx="15" cy="15" r="5.700" fill="#2d74ea"/></svg><span class="absolute left-[29px] top-[5px] size-[20px] rounded-full bg-[#d4dadd] border border-[#9aa6ab] flex justify-center items-center"><svg class="size-[14px]!" viewBox="0 0 14 14" fill="#56606e"><circle cx="7" cy="3.800" r="3"/><path d="M1 13q0-5 6-5t6 5z"/></svg></span><i></i></div>
    <div><svg viewBox="0 0 30 30"><defs><linearGradient id="ph" x1="0" y1="0" x2="1" y2="0"><stop stop-color="#0f5fae"/><stop offset="1" stop-color="#5b52b0"/></linearGradient></defs><rect x="2" y="2" width="26" height="26" rx="3" fill="url(#ph)"/><path d="M3 27L14 13q1.500-1.500 3 0l11 12q0 3-3 3H5q-2 0-2-1z" fill="#2bb7ef"/><path d="M9 28l6-6q1.500-1 3 0l6 6z" fill="#1382d4"/><circle cx="21.500" cy="6.500" r="2.500" fill="#fff"/></svg><i></i></div>
  </div>
  <svg class="ml-[126px] -mt-px w-[14px] h-[8px]" viewBox="0 0 14 8"><path d="M.8 7.300L7 1.200l6.200 6.100" fill="none" stroke="#1b1b1b" stroke-width="1.700"/></svg>
  <svg class="ml-[23px] -mt-[2px] w-[20px] h-[15px]" viewBox="0 0 20 15"><path d="M5 14a4.300 4.300 0 0 1-.8-8.500A6.300 6.300 0 0 1 15.500 5a4.500 4.500 0 0 1 0 9z" fill="#e4e4e4" stroke="#222" stroke-width="1.300"/><path d="M3 8q3-3 5-5 5-3 7 3L6 11z" fill="#8f8f8f"/></svg>
  <div class="ml-[19px] w-[38px] text-center leading-[20px] tracking-[-0.2px] -mt-px">ENG<br>IN</div>
  <svg class="ml-[18px] w-[20px] h-[15px]" viewBox="0 0 20 15" fill="none" stroke="#1b1b1b" stroke-width="1.500"><path d="M1 6q9-10 18 0M3.500 8.500q6.500-7 13 0" stroke="#9fb3b8"/><path d="M6 10.500q4-4.500 8 0"/><circle cx="10" cy="13" r="1.200" fill="#1b1b1b"/></svg>
  <svg class="ml-[10px] w-[20px] h-[16px]" viewBox="0 0 20 16" fill="none" stroke="#1b1b1b" stroke-width="1.400"><path d="M1 5.500h3L8 1.500v13l-4-4H1zM11 5q2 3 0 6M13.500 3q4 5 0 10"/><path d="M16 1.500q5 6.500 0 13" stroke="#9fb3b8"/></svg>
  <svg class="ml-[10px] w-[21px] h-[13px]" viewBox="0 0 21 13"><rect x=".8" y=".8" width="16.400" height="11.400" rx="3" fill="none" stroke="#1b1b1b" stroke-width="1.500"/><path d="M3 3h3.500v7H3zM18 4.500q3 0 3 2t-3 2z" fill="#1b1b1b"/></svg>
  <div class="ml-[16px] w-[80px] text-right leading-[20px] tracking-[-0.15px] -mt-[3px]">23:22<br>16-10-2023</div>
  <span class="ml-[10px] size-[20px] rounded-full bg-[#238494] text-white text-[12px] leading-[20px] text-center">1</span>
</footer>
</body>
</html>
